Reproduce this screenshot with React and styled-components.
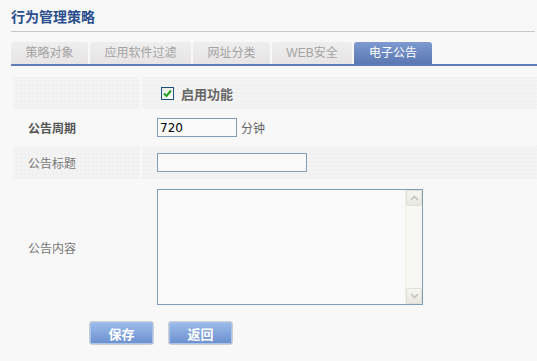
import React, { useState } from "react";
import styled, { createGlobalStyle } from "styled-components";

const GlobalStyle = createGlobalStyle`
  html, body {
    margin: 0;
    padding: 0;
    background: #f8f8f8;
  }
  body {
    font-family: "Liberation Sans", "Noto Sans CJK SC", sans-serif;
    font-size: 12px;
    color: #555;
  }
`;

const Page = styled.div`
  padding: 7px 0 0 11px;
`;

const Title = styled.h3`
  margin: 0;
  font-size: 14px;
  line-height: 20px;
  font-weight: bold;
  color: #2b4e8e;
  padding-bottom: 4px;
  border-bottom: 1px solid #c8c8c8;
  margin-right: 2px;
`;

const TabBar = styled.div`
  display: flex;
  gap: 2px;
  margin-top: 10px;
  border-bottom: 2px solid #5f7db8;
`;

const Tab = styled.div`
  height: 22px;
  line-height: 22px;
  width: ${(p) => p.w}px;
  text-align: center;
  font-size: 12px;
  border-radius: 3px 3px 0 0;
  cursor: pointer;
  color: ${(p) => (p.active ? "#fff" : "#a3a3a3")};
  background: ${(p) =>
    p.active
      ? "linear-gradient(#7e9ad0, #5a77b2)"
      : "linear-gradient(#efeeee, #e6e4e4)"};
`;

const Form = styled.table`
  border-spacing: 2px;
  margin-top: 9px;
  width: calc(100% + 2px);
`;

const Row = styled.tr`
  & > td {
    background-color: ${(p) => (p.shaded ? "#f1f1f1" : "transparent")};
    background-image: ${(p) =>
      p.shaded
        ? "radial-gradient(circle, #f5f5f5 0.7px, transparent 1px)"
        : "none"};
    background-size: 4px 4px;
  }
`;

const LabelCell = styled.td`
  width: 112px;
  height: ${(p) => p.h || 33}px;
  padding: 0 0 0 15px;
  font-weight: ${(p) => (p.bold ? "bold" : "normal")};
  color: ${(p) => (p.bold ? "#555" : "#777")};
  vertical-align: middle;
`;

const FieldCell = styled.td`
  padding: 0 0 0 15px;
  vertical-align: middle;
`;

const CheckLabel = styled.label`
  display: flex;
  align-items: center;
  gap: 7px;
  font-weight: bold;
  font-size: 13px;
  color: #666;
  padding-left: 4px;
`;

const CheckBox = styled.span`
  width: 11px;
  height: 11px;
  border: 1px solid #1c5180;
  background: linear-gradient(135deg, #e6e6e2, #fff);
  display: flex;
  align-items: center;
  justify-content: center;
`;

const TextInput = styled.input`
  box-sizing: border-box;
  width: ${(p) => p.w}px;
  height: 19px;
  border: 1px solid #7f9db9;
  background: #fafafa;
  padding: 0 2px;
  font-family: "DejaVu Sans", sans-serif;
  font-size: 12px;
  color: #000;
  outline: none;
  vertical-align: middle;
`;

const Unit = styled.span`
  margin-left: 4px;
  color: #666;
  vertical-align: middle;
`;

const AreaBox = styled.div`
  box-sizing: border-box;
  width: 266px;
  height: 116px;
  border: 1px solid #7f9db9;
  display: flex;
  background: #fafafa;
`;

const Area = styled.textarea`
  flex: 1;
  border: none;
  resize: none;
  background: transparent;
  outline: none;
  overflow: hidden;
  font-family: inherit;
  font-size: 12px;
`;

const ScrollBar = styled.div`
  width: 16px;
  display: flex;
  flex-direction: column;
  justify-content: space-between;
  border-left: 1px solid #eeeee8;
  background: #f7f7f4;
`;

const ScrollBtn = styled.div`
  height: 16px;
  display: flex;
  align-items: center;
  justify-content: center;
  background: linear-gradient(#f6f6f1, #e8e8e0);
  border: 1px solid #e0e0d8;
  border-radius: 2px;
  box-sizing: border-box;
`;

const Buttons = styled.div`
  display: flex;
  gap: 14px;
  margin: 6px 0 0 78px;
`;

const Button = styled.button`
  width: 65px;
  height: 24px;
  border: 1px solid #c9cdd4;
  border-radius: 3px;
  background: linear-gradient(#9cbdeb, #6a8ecf);
  box-shadow: inset 0 0 0 1px #a9c3ea;
  color: #fff;
  font-family: inherit;
  font-weight: bold;
  font-size: 13px;
  cursor: pointer;
`;

const tabs = [
  { name: "策略对象", w: 77 },
  { name: "应用软件过滤", w: 101 },
  { name: "网址分类", w: 77 },
  { name: "WEB安全", w: 80 },
  { name: "电子公告", w: 78 },
];

function Chevron({ up }) {
  return (
    <svg width="9" height="6" viewBox="0 0 9 6">
      <path
        d={up ? "M1 5 L4.5 1.5 L8 5" : "M1 1 L4.5 4.5 L8 1"}
        fill="none"
        stroke="#c4c4bc"
        strokeWidth="1.6"
      />
    </svg>
  );
}

export default function App() {
  const [active, setActive] = useState(4);
  const [enabled, setEnabled] = useState(true);

  return (
    <Page>
      <GlobalStyle />
      <Title>行为管理策略</Title>
      <TabBar>
        {tabs.map((t, i) => (
          <Tab key={t.name} w={t.w} active={i === active} onClick={() => setActive(i)}>
            {t.name}
          </Tab>
        ))}
      </TabBar>
      <Form>
        <tbody>
          <Row shaded>
            <LabelCell h={32} />
            <FieldCell>
              <CheckLabel onClick={() => setEnabled(!enabled)}>
                <CheckBox>
                  {enabled && (
                    <svg width="9" height="9" viewBox="0 0 9 9">
                      <path d="M1 4.5 L3.5 7 L8 1.5" fill="none" stroke="#21a121" strokeWidth="2" />
                    </svg>
                  )}
                </CheckBox>
                启用功能
              </CheckLabel>
            </FieldCell>
          </Row>
          <Row>
            <LabelCell bold>公告周期</LabelCell>
            <FieldCell>
              <TextInput w={80} defaultValue="720" />
              <Unit>分钟</Unit>
            </FieldCell>
          </Row>
          <Row shaded>
            <LabelCell>公告标题</LabelCell>
            <FieldCell>
              <TextInput w={150} />
            </FieldCell>
          </Row>
          <Row>
            <LabelCell h={132}>公告内容</LabelCell>
            <FieldCell>
              <AreaBox>
                <Area />
                <ScrollBar>
                  <ScrollBtn>
                    <Chevron up />
                  </ScrollBtn>
                  <ScrollBtn>
                    <Chevron />
                  </ScrollBtn>
                </ScrollBar>
              </AreaBox>
            </FieldCell>
          </Row>
        </tbody>
      </Form>
      <Buttons>
        <Button>保存</Button>
        <Button>返回</Button>
      </Buttons>
    </Page>
  );
}
